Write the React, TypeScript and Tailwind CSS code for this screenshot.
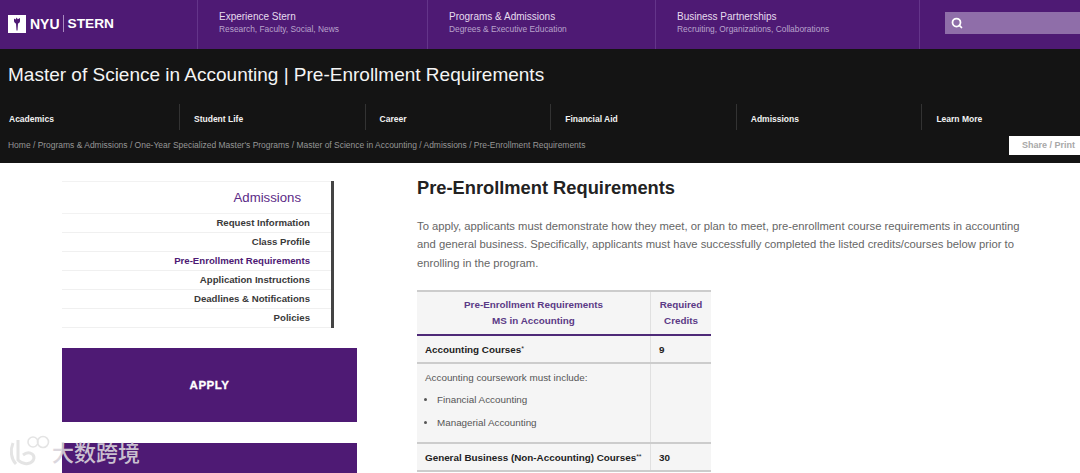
import { Search } from 'lucide-react';

const topLinks = [
  { title: 'Experience Stern', sub: 'Research, Faculty, Social, News', width: 'w-[230px]' },
  { title: 'Programs & Admissions', sub: 'Degrees & Executive Education', width: 'w-[228px]' },
  { title: 'Business Partnerships', sub: 'Recruiting, Organizations, Collaborations', width: 'w-[264px]' },
];

const subNav = ['Academics', 'Student Life', 'Career', 'Financial Aid', 'Admissions', 'Learn More'];

const sideLinks = [
  'Request Information',
  'Class Profile',
  'Pre-Enrollment Requirements',
  'Application Instructions',
  'Deadlines & Notifications',
  'Policies',
];

function Logo() {
  return (
    <div className="flex w-[197px] shrink-0 items-center pb-[2px] pl-[8px]">
      <div className="flex h-[18px] w-[18px] items-center justify-center bg-white">
        <svg width="10" height="14" viewBox="0 0 10 14">
          <path d="M2 1.5 L3.6 2.6 L4.6 0.5 L5.8 2.2 L8 1 L8 4 C8 5.6 6.8 6.4 6 6.6 L5.5 13.5 L4.5 13.5 L4 6.6 C3 6.2 2 5.2 2 4 Z" fill="#4e1a74" />
        </svg>
      </div>
      <span className="ml-[4px] text-[14px] font-bold leading-none text-white">NYU</span>
      <div className="mx-[3.5px] h-[17px] w-px bg-[#a98bc0]" />
      <span className="text-[13.7px] font-bold leading-none text-white">STERN</span>
    </div>
  );
}

function Header() {
  return (
    <header className="flex h-[49px] bg-[#4e1a74]">
      <Logo />
      {topLinks.map((link) => (
        <div key={link.title} className={`${link.width} shrink-0 border-l border-[#64358a] pl-[21px] pt-[11px]`}>
          <div className="text-[10px] leading-[12px] text-[#e6dcee]">{link.title}</div>
          <div className="mt-[1px] text-[8.4px] leading-[11px] text-[#b9a3cc]">{link.sub}</div>
        </div>
      ))}
      <div className="flex-1 border-l border-[#64358a] pl-[25px] pt-[12px]">
        <div className="flex h-[22px] items-center bg-[#8f6ea9] pl-[6px]">
          <Search size={12} strokeWidth={3.5} className="text-white" />
        </div>
      </div>
    </header>
  );
}

function Banner() {
  return (
    <section className="h-[114px] bg-[#141414]">
      <h1 className="pl-[8px] pt-[13px] text-[19px] leading-[26px] text-[#f5f5f5]">
        Master of Science in Accounting | Pre-Enrollment Requirements
      </h1>
      <nav className="mt-[16px] flex h-[26px]">
        {subNav.map((item, i) => (
          <div
            key={item}
            className={`flex shrink-0 items-center pt-[4px] text-[8.5px] font-bold text-[#f2f2f2] ${i === 0 ? 'w-[179px] pl-[9px]' : 'w-[185.6px] border-l border-[#333333] pl-[14px]'}`}
          >
            {item}
          </div>
        ))}
      </nav>
      <div className="mt-[6px] flex h-[19px] items-center justify-between">
        <div className="pl-[8px] text-[8.48px] text-[#969696]">
          Home / Programs &amp; Admissions / One-Year Specialized Master's Programs / Master of Science in Accounting / Admissions / Pre-Enrollment Requirements
        </div>
        <div className="flex h-[19px] w-[71px] items-center justify-end bg-white pr-[5px] text-[9px] font-bold text-[#a8a8a8]">
          Share / Print
        </div>
      </div>
    </section>
  );
}

function Sidebar() {
  return (
    <aside className="ml-[62px] w-[295px] shrink-0 pt-[18px]">
      <div className="w-[272px] border-r-[3px] border-[#444444]">
        <div className="h-[33px] border-y border-[#f2f2f2] pr-[30px] pt-[7px] text-right text-[13.2px] leading-[18px] text-[#5b2a86]">
          Admissions
        </div>
        {sideLinks.map((link) => (
          <div
            key={link}
            className={`h-[19px] border-b border-[#f0f0f0] pr-[21px] text-right text-[9.65px] font-bold leading-[17px] ${link === 'Pre-Enrollment Requirements' ? 'text-[#4e1a74]' : 'text-[#3a3a3a]'}`}
          >
            {link}
          </div>
        ))}
      </div>
      <div className="mt-[20px] flex h-[74px] items-center justify-center bg-[#4e1a74] pt-[2px] text-[11.5px] font-black tracking-[0.5px] text-white [-webkit-text-stroke:0.3px_white]">
        APPLY
      </div>
      <div className="mt-[21px] h-[74px] bg-[#4e1a74]" />
    </aside>
  );
}

function Stars({ mark }: { mark: string }) {
  return <span className="align-top text-[7px] font-normal leading-[12px]">{mark}</span>;
}

function CourseTable() {
  return (
    <div className="mt-[17.5px] w-[294px] border-t-[2px] border-[#cccccc] bg-[#f5f5f5] text-[9.85px] text-[#444444]">
      <div className="flex h-[44px] border-b-[2px] border-[#4e2a78] font-bold leading-[15.5px] text-[#5b3a86]">
        <div className="flex w-[234px] items-center justify-center border-r border-[#e0e0e0] text-center">
          <div>Pre-Enrollment Requirements<br />MS in Accounting</div>
        </div>
        <div className="flex flex-1 items-center justify-center text-center">
          <div>Required<br />Credits</div>
        </div>
      </div>
      <div className="flex h-[28px] border-b-[2px] border-[#cccccc] font-bold text-[#222222]">
        <div className="flex w-[234px] items-center border-r border-[#e0e0e0] pl-[8px] pt-[3px]">
          <div>Accounting Courses<Stars mark="*" /></div>
        </div>
        <div className="flex flex-1 items-center pl-[8px] pt-[3px]">9</div>
      </div>
      <div className="flex h-[80px] border-b-[2px] border-[#cccccc] text-[#555555]">
        <div className="w-[234px] border-r border-[#e0e0e0] pl-[8px] pt-[7px]">
          <div className="leading-[14px]">Accounting coursework must include:</div>
          <ul className="mt-[8px] list-disc pl-[12px]">
            <li className="leading-[14px]">Financial Accounting</li>
            <li className="mt-[9px] leading-[14px]">Managerial Accounting</li>
          </ul>
        </div>
        <div className="flex-1" />
      </div>
      <div className="flex h-[28px] border-b-[2px] border-[#cccccc] font-bold text-[#222222]">
        <div className="flex w-[234px] items-center border-r border-[#e0e0e0] pl-[8px] pt-[3px]">
          <div>General Business (Non-Accounting) Courses<Stars mark="**" /></div>
        </div>
        <div className="flex flex-1 items-center pl-[8px] pt-[3px]">30</div>
      </div>
    </div>
  );
}

function Watermark() {
  return (
    <div className="absolute bottom-[6px] left-[9px] flex items-center opacity-90">
      <svg width="42" height="32" viewBox="0 0 42 32" fill="none" stroke="#e2e2e2" strokeWidth="3">
        <path d="M4 8 C1 15 2 24 7 29" />
        <path d="M9 5 L9 25 C15 31 24 29 25 23 C25 18 19 16 14 20" />
        <circle cx="24" cy="7" r="5" strokeWidth="1.6" />
        <circle cx="34" cy="7" r="5.5" strokeWidth="1.6" />
      </svg>
      <span className="ml-[1px] font-['Noto_Sans_CJK_SC',sans-serif] text-[22px] font-medium leading-none text-[#d8d3da]">大数跨境</span>
    </div>
  );
}

export default function App() {
  return (
    <div className="relative h-[473px] w-[1080px] overflow-hidden bg-white font-['Liberation_Sans',Arial,sans-serif]">
      <Header />
      <Banner />
      <div className="flex">
        <Sidebar />
        <main className="ml-[60px] w-[610px] pt-[14px]">
          <h2 className="text-[18.3px] font-bold leading-[22px] text-[#222222]">Pre-Enrollment Requirements</h2>
          <p className="mt-[17.5px] text-[11.25px] leading-[18.5px] text-[#666666]">
            To apply, applicants must demonstrate how they meet, or plan to meet, pre-enrollment course requirements in accounting and general business. Specifically, applicants must have successfully completed the listed credits/courses below prior to enrolling in the program.
          </p>
          <CourseTable />
        </main>
      </div>
      <Watermark />
    </div>
  );
}
